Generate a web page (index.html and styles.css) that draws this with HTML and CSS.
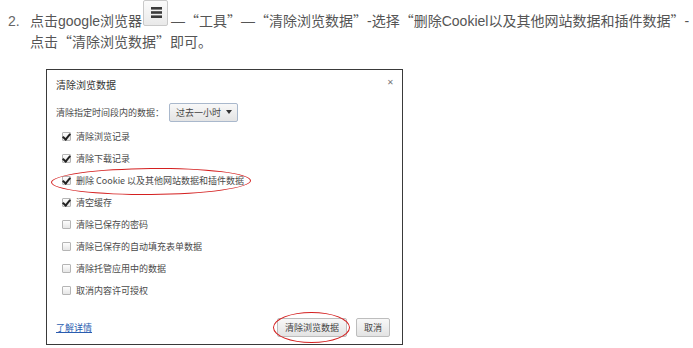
FILE: index.html
```html
<!DOCTYPE html>
<html lang="zh-CN">
  <head>
    <meta charset="UTF-8" />
    <title>清除浏览数据</title>
    <link rel="stylesheet" href="styles.css">
  </head>
  <body>
    <div class="step">
      <span class="num">2.</span>
      <div class="step-body">
        <p class="lead">点击google浏览器<span class="menu-btn"><svg width="25" height="26" viewBox="0 0 25 26"><rect x="8" y="7" width="11" height="2.6" fill="#3a3a3a"/><rect x="8" y="11.2" width="11" height="2.6" fill="#3a3a3a"/><rect x="8" y="15.4" width="11" height="2.6" fill="#3a3a3a"/></svg></span>—<span class="q">“</span>工具<span class="q">”</span>—<span class="q">“</span>清除浏览数据<span class="q">”</span>-选择<span class="q">“</span>删除Cookiel以及其他网站数据和插件数据<span class="q">”</span>-<br>点击<span class="q">“</span>清除浏览数据<span class="q">”</span>即可。</p>

        <div class="dialog">
          <div class="dlg-head">
            <span class="dlg-title">清除浏览数据</span>
            <span class="dlg-close">✕</span>
          </div>
          <div class="range">
            <span>清除指定时间段内的数据：</span>
            <span class="select">过去一小时<span class="arrow"></span></span>
          </div>
          <ul class="opts">
            <li><span class="box checked"></span>清除浏览记录</li>
            <li><span class="box checked"></span>清除下载记录</li>
            <li><span class="box checked"></span>删除 Cookie 以及其他网站数据和插件数据</li>
            <li><span class="box checked"></span>清空缓存</li>
            <li><span class="box"></span>清除已保存的密码</li>
            <li><span class="box"></span>清除已保存的自动填充表单数据</li>
            <li><span class="box"></span>清除托管应用中的数据</li>
            <li><span class="box"></span>取消内容许可授权</li>
          </ul>
          <div class="dlg-foot">
            <a class="more" href="#">了解详情</a>
            <div class="btns">
              <button class="btn">清除浏览数据</button>
              <button class="btn">取消</button>
            </div>
          </div>
          <span class="ring ring-cookie"></span>
          <span class="ring ring-btn"></span>
        </div>
      </div>
    </div>
  </body>
</html>
```

FILE: styles.css
```css
body {
  margin: 0;
  background: #fff;
  font-family: "Liberation Sans", "Noto Sans CJK SC", sans-serif;
  color: #555;
}

.step {
  display: flex;
}

.num {
  width: 30px;
  padding-left: 8px;
  padding-top: 11px;
  font-size: 14px;
  line-height: 20px;
  color: #666;
  box-sizing: border-box;
  flex: none;
}

.step-body {
  flex: 1;
}

.lead {
  margin: 0;
  font-size: 14px;
  line-height: 20px;
  white-space: nowrap;
}

.q {
  font-family: "Noto Sans CJK SC", sans-serif;
  font-feature-settings: "fwid";
}

.menu-btn {
  display: inline-block;
  width: 25px;
  height: 26px;
  margin: 0 3px 0 1px;
  box-sizing: border-box;
  border: 1px solid #c9c9c9;
  border-radius: 2px;
  background: linear-gradient(#fbfbfb, #e9e9e9);
  vertical-align: baseline;
  overflow: hidden;
}

.menu-btn svg {
  display: block;
  margin: -1px 0 0 -1px;
}

/* dialog screenshot */
.dialog {
  position: relative;
  width: 357px;
  margin: 17px 0 0 16px;
  box-sizing: border-box;
  border: 1px solid #3a3a3a;
  padding: 7px 12px 7px 9px;
  font-family: "Noto Sans CJK SC", sans-serif;
  font-size: 9px;
  color: #4a4a4a;
  background: #fff;
}

.dlg-head {
  display: flex;
  justify-content: space-between;
  align-items: flex-start;
  height: 16px;
}

.dlg-title {
  font-size: 10px;
  line-height: 16px;
  color: #333;
}

.dlg-close {
  font-size: 8px;
  line-height: 8px;
  color: #777;
  margin: 1px -4px 0 0;
}

.range {
  display: flex;
  align-items: center;
  height: 20px;
  margin-top: 9px;
}

.select {
  display: inline-flex;
  align-items: center;
  width: 69px;
  height: 19px;
  margin-left: 5px;
  padding-left: 6px;
  box-sizing: border-box;
  border: 1px solid #a9b8cc;
  border-radius: 2px;
  background: linear-gradient(#f8f8f8, #e4e4e4);
  color: #444;
}

.arrow {
  margin-left: auto;
  margin-right: 5px;
  width: 0;
  height: 0;
  border-left: 3px solid transparent;
  border-right: 3px solid transparent;
  border-top: 4px solid #333;
}

.opts {
  list-style: none;
  margin: 3px 0 0;
  padding: 0 0 0 6px;
}

.opts li {
  display: flex;
  align-items: center;
  height: 22px;
}

.box {
  width: 9px;
  height: 9px;
  margin-right: 5px;
  box-sizing: border-box;
  border: 1px solid #b5b5b5;
  border-radius: 1px;
  background: linear-gradient(#fdfdfd, #e6e6e6);
  position: relative;
}

.box.checked::after {
  content: "";
  position: absolute;
  left: 1px;
  top: -1px;
  width: 3px;
  height: 6px;
  border: solid #222;
  border-width: 0 2px 2px 0;
  transform: rotate(40deg);
}

.dlg-foot {
  display: flex;
  justify-content: space-between;
  align-items: center;
  margin-top: 17px;
  height: 19px;
}

.more {
  color: #2a5db0;
  text-decoration: underline;
}

.btns {
  display: flex;
  gap: 9px;
}

.btn {
  height: 19px;
  padding: 0 7px;
  font-family: inherit;
  font-size: 9px;
  color: #444;
  border: 1px solid #bdbdbd;
  border-radius: 2px;
  background: linear-gradient(#f8f8f8, #e3e3e3);
}

/* red annotation rings */
.ring {
  position: absolute;
  border: 1.5px solid #d42020;
  border-radius: 50%;
}

.ring-cookie {
  left: 4px;
  top: 98px;
  width: 198px;
  height: 25px;
  transform: rotate(-0.5deg);
}

.ring-btn {
  left: 226px;
  top: 242px;
  width: 75px;
  height: 29px;
}
```
